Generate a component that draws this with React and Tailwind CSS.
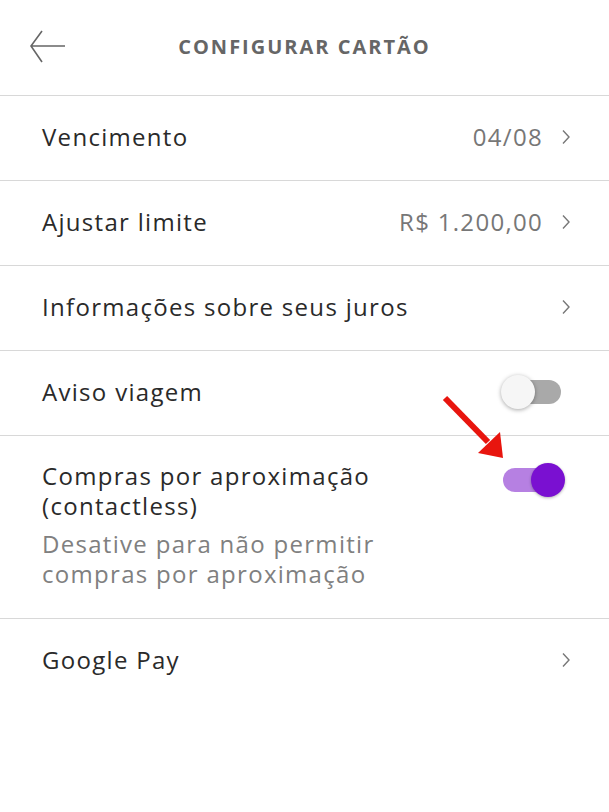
import React from "react";

const font = { fontFamily: '"Open Sans", "Liberation Sans", sans-serif' };

function Chevron() {
  return (
    <svg width="10" height="16" viewBox="0 0 10 16" className="shrink-0">
      <path d="M2 1.5 L8 8 L2 14.5" fill="none" stroke="#777" strokeWidth="1.4" />
    </svg>
  );
}

function Toggle({ on }) {
  return on ? (
    <div className="relative w-[60px] h-[34px] flex items-center">
      <div className="ml-[2px] w-[54px] h-[24px] rounded-full bg-[#b680e2]" />
      <div className="absolute right-[-4px] top-0 w-[34px] h-[34px] rounded-full bg-[#7a10d1] shadow-[0_1px_3px_rgba(0,0,0,0.3)]" />
    </div>
  ) : (
    <div className="relative w-[60px] h-[34px] flex items-center">
      <div className="ml-[16px] w-[44px] h-[24px] rounded-r-full bg-[#a9a9a9]" />
      <div className="absolute left-0 top-0 w-[34px] h-[34px] rounded-full bg-[#f6f6f6] shadow-[0_1px_4px_rgba(0,0,0,0.35)]" />
    </div>
  );
}

function Row({ label, value, last }) {
  return (
    <div className={`h-[85px] flex items-center pl-[42px] pr-[38px] pb-[3px] ${last ? "" : "border-b border-[#d8d8d8]"}`}>
      <span className="flex-1 text-[24px] text-[#2a2a2a] tracking-[1.3px]">{label}</span>
      {value && <span className="text-[24px] text-[#777] tracking-[1.3px] mr-[18px]">{value}</span>}
      <Chevron />
    </div>
  );
}

export default function App() {
  return (
    <div className="relative w-[609px] h-[812px] bg-white overflow-hidden" style={font}>
      <div className="h-[96px] border-b border-[#d8d8d8] flex items-center relative">
        <svg width="40" height="36" viewBox="0 0 40 36" className="absolute left-[27px] top-[29px]">
          <path d="M38 17 H5 M15 2 L4 17 L15 33" fill="none" stroke="#666" strokeWidth="1.6" />
        </svg>
        <div className="flex-1 text-center text-[20px] font-bold text-[#666] tracking-[2px] pb-[2px]">
          CONFIGURAR CARTÃO
        </div>
      </div>
      <Row label="Vencimento" value="04/08" />
      <Row label="Ajustar limite" value="R$ 1.200,00" />
      <Row label="Informações sobre seus juros" />
      <div className="h-[85px] border-b border-[#d8d8d8] flex items-center pl-[42px] pr-[48px] pb-[3px]">
        <span className="flex-1 text-[24px] text-[#2a2a2a] tracking-[1.3px]">Aviso viagem</span>
        <Toggle on={false} />
      </div>
      <div className="h-[183px] border-b border-[#d8d8d8] flex pl-[42px] pr-[48px] pt-[25px]">
        <div className="flex-1 leading-[30px] tracking-[1.3px] text-[24px]">
          <div className="text-[#2a2a2a]">Compras por aproximação<br />(contactless)</div>
          <div className="text-[#808080] mt-[8px]">Desative para não permitir<br />compras por aproximação</div>
        </div>
        <div className="pt-[2px]">
          <Toggle on />
        </div>
      </div>
      <Row label="Google Pay" last />
      <svg width="70" height="70" viewBox="0 0 70 70" className="absolute left-[440px] top-[392px]">
        <path d="M5 6 L48 50" stroke="#e8150e" strokeWidth="6" />
        <path d="M38 61 L63 66 L60 40 Z" fill="#e8150e" />
      </svg>
    </div>
  );
}
